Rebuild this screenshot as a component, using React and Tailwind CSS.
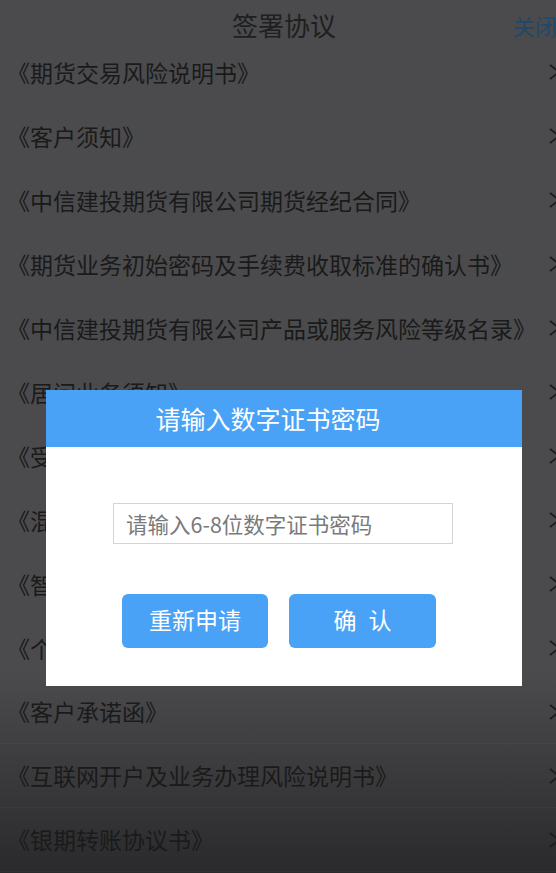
import React from "react";

const rows = [
  "《期货交易风险说明书》",
  "《客户须知》",
  "《中信建投期货有限公司期货经纪合同》",
  "《期货业务初始密码及手续费收取标准的确认书》",
  "《中信建投期货有限公司产品或服务风险等级名录》",
  "《居间业务须知》",
  "《受益所有人信息登记表》",
  "《混码交易风险揭示书》",
  "《智能交易风险揭示书》",
  "《个人税收居民身份声明文件》",
  "《客户承诺函》",
  "《互联网开户及业务办理风险说明书》",
  "《银期转账协议书》",
];

function Chevron() {
  return (
    <svg width="14" height="20" viewBox="0 0 14 20" className="shrink-0 mr-[-6px]">
      <path d="M2 3 L11 10 L2 17" fill="none" stroke="#1c1c1c" strokeWidth="1.8" />
    </svg>
  );
}

export default function App() {
  return (
    <div
      className="relative w-[556px] h-[873px] overflow-hidden bg-[linear-gradient(to_bottom,#4b4b4d_0%,#4b4b4d_77%,#2a2a2c_100%)]"
      style={{ fontFamily: '"Noto Sans CJK SC", "Noto Sans", sans-serif' }}
    >
      <div className="relative h-[40px] flex items-center justify-center pt-[10px] pl-[12px]">
        <span className="text-[26px] leading-none text-[#1f1f1f]">签署协议</span>
        <span className="absolute right-[-1px] top-[14px] text-[22px] leading-none text-[#22476a]">关闭</span>
      </div>
      <div className="flex flex-col">
        {rows.map((r, i) => (
          <div
            key={i}
            className={
              "h-[64px] flex items-center justify-between pl-[7px] " +
              (i >= 10 ? "border-b border-white/[0.03]" : "")
            }
          >
            <span className="text-[23px] leading-none text-[#1a1a1a] whitespace-nowrap">{r}</span>
            <Chevron />
          </div>
        ))}
      </div>

      <div className="absolute left-[46px] top-[390px] w-[476px] h-[296px] bg-white flex flex-col">
        <div className="h-[57px] bg-[#49a2f6] flex items-center justify-center pr-[32px]">
          <span className="text-[25px] leading-none text-white">请输入数字证书密码</span>
        </div>
        <div className="flex flex-col items-start">
          <div className="mt-[56px] ml-[67px] w-[340px] h-[41px] border border-[#d4d4d4] flex items-center pl-[12px]">
            <span className="text-[21.5px] leading-none text-[#7a7a7a] whitespace-nowrap">请输入6-8位数字证书密码</span>
          </div>
          <div className="mt-[50px] ml-[76px] flex gap-[21px]">
            <div className="w-[146px] h-[54px] rounded-[6px] bg-[#49a2f6] flex items-center justify-center pb-[4px]">
              <span className="text-[23px] leading-none text-white">重新申请</span>
            </div>
            <div className="w-[147px] h-[54px] rounded-[6px] bg-[#49a2f6] flex items-center justify-center pb-[4px]">
              <span className="text-[23px] leading-none text-white tracking-[12px] pl-[12px]">确认</span>
            </div>
          </div>
        </div>
      </div>
    </div>
  );
}
